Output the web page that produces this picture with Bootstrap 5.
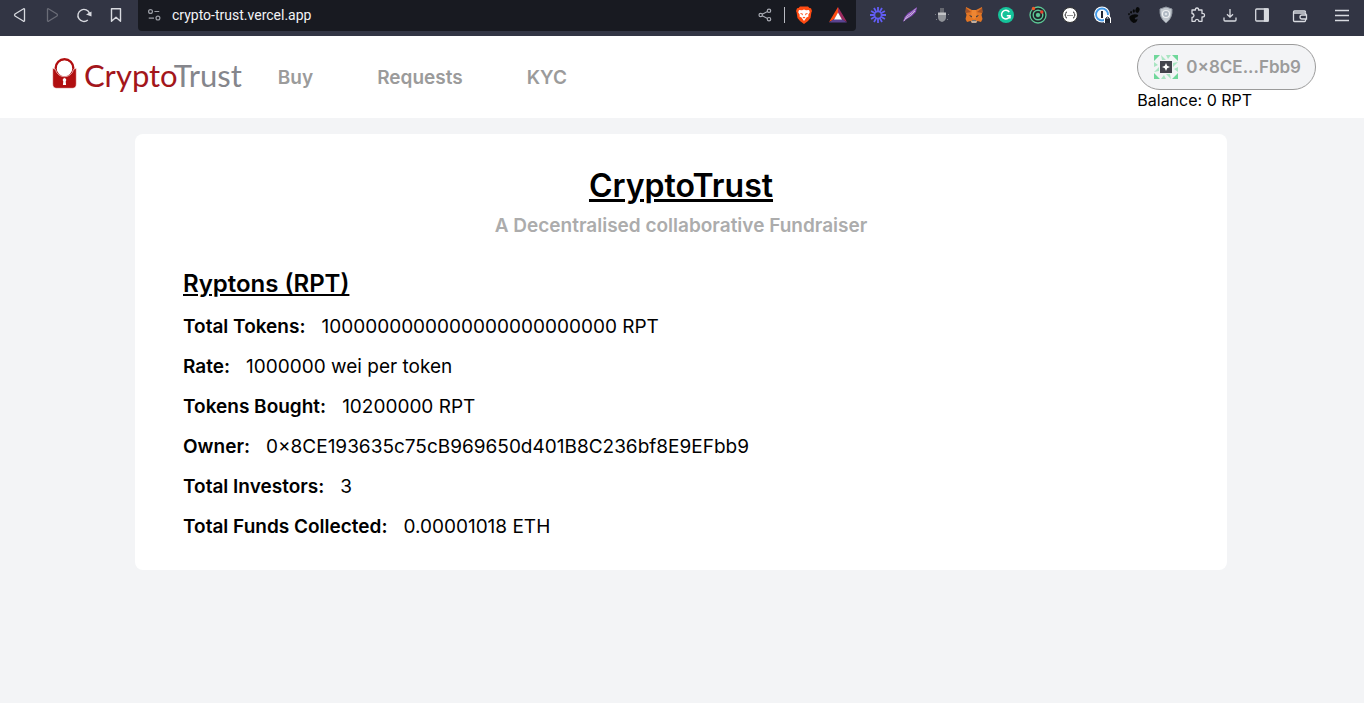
<!DOCTYPE html>
<html lang="en">
<head>
<meta charset="utf-8">
<meta name="viewport" content="width=device-width, initial-scale=1">
<title>CryptoTrust</title>
<link href="https://cdn.jsdelivr.net/npm/bootstrap@5.3.0/dist/css/bootstrap.min.css" rel="stylesheet">
<style>
body { font-family: Inter, "Liberation Sans", sans-serif; font-optical-sizing: none; background: #f3f4f6; color: #000; font-size: 16px; line-height: 20px; }
.toolbar { background: #323544; height: 36px; padding: 0 6px 0 4px; font-family: Roboto, sans-serif; }
.tool { width: 32px; height: 30px; padding: 0; border: 0; background: none; color: #d8dae0; display: flex; align-items: center; justify-content: center; flex: none; }
.tool svg { display: block; }
.tool:disabled { color: #6a6c77; }
.tool-wallet { margin: 0 10px 0 6px; }
.address { background: #181a21; padding: 0 2px 1px 0; border-radius: 0 0 4px 4px; margin: 0 6px; min-width: 0; }
.address input { background: none; border: 0; color: #f2f3f5; font-size: 14px; line-height: 20px; padding: 0 0 0 2px; outline: 0; min-width: 0; }
.address .split { width: 1px; height: 16px; background: #b9bbc2; margin: 0 3px; }
.tool-shields { margin-right: 2px; }
.site-nav { min-height: 82px; padding: 0 48px 0 52px; }
.brand-link { padding-bottom: 4px; }
.brand-text { font-family: Lato, sans-serif; font-weight: 400; font-size: 31px; line-height: 40px; color: #a3161b; }
.brand-text span { color: #85868c; }
.site-links { gap: 64px; margin-left: 36px; padding-top: 2px; }
.site-link { color: #9b9b9b; font-size: 19px; font-weight: 600; text-decoration: none; }
.wallet { height: 46px; border: 1px solid #9b9b9b; border-radius: 23px; background: #f3f4f6; color: #9b9b9b; font-size: 17px; font-weight: 600; padding: 0 14px 0 16px; gap: 8px; }
.panel { background: #fff; border-radius: 8px; margin: 16px 137px 16px 135px; padding: 32px 48px 23px; }
.title { font-size: 32px; line-height: 40px; font-weight: 600; }
.subtitle { font-size: 19px; line-height: 40px; font-weight: 600; color: #acacac; margin-bottom: 22px; }
.section-title { font-size: 24px; line-height: 32px; font-weight: 600; margin-bottom: 7px; }
.facts { font-size: 19px; line-height: 40px; }
.facts dt { font-weight: 600; }
</style>
</head>
<body>
<header class="toolbar d-flex align-items-start">
  <button class="tool" aria-label="Back"><svg width="16" height="16" viewBox="0 0 16 16" fill="none" stroke="currentColor" stroke-width="1.3" stroke-linejoin="round"><path d="M12.500 2v12q-.5.8-1.300 0L3 9q-1-1 0-2l8.200-5q.8-.6 1.300 0z"/></svg></button>
  <button class="tool" aria-label="Forward" disabled><svg width="16" height="16" viewBox="0 0 16 16" fill="none" stroke="currentColor" stroke-width="1.300" stroke-linejoin="round"><path d="M3.500 2v12q.5.8 1.300 0L13 9q1-1 0-2L4.800 2q-.8-.6-1.300 0z"/></svg></button>
  <button class="tool" aria-label="Reload"><svg width="16" height="16" viewBox="0 0 16 16" fill="none" stroke="currentColor" stroke-width="1.400"><path d="M11.800 13A6 6 0 1 1 13.600 6.500"/><path d="M15.500 4.500v5L10 7.500z" fill="currentColor" stroke="none"/></svg></button>
  <button class="tool" aria-label="Bookmark"><svg width="16" height="16" viewBox="0 0 16 16" fill="none" stroke="currentColor" stroke-width="1.400" stroke-linejoin="round"><path d="M3.500 1.700h9v12.600L8 10.300l-4.500 4z"/></svg></button>
  <div class="address d-flex align-items-center flex-grow-1">
    <button class="tool" aria-label="Site settings"><svg width="14" height="14" viewBox="0 0 16 16" fill="none" stroke="#9a9da5" stroke-width="1.400"><circle cx="4" cy="4" r="2.200"/><path d="M8.500 4H14M2 11.500h6"/><circle cx="12.500" cy="11.500" r="2.200"/></svg></button>
    <input class="flex-grow-1" type="text" aria-label="Address" value="crypto-trust.vercel.app">
    <button class="tool" aria-label="Share"><svg width="14" height="14" viewBox="0 0 14 14" fill="none" stroke="#a8abb3" stroke-width="1.200"><circle cx="2.700" cy="7" r="1.700"/><circle cx="11" cy="2.800" r="1.700"/><circle cx="11" cy="11.200" r="1.700"/><path d="M4.200 6.200l5.300-2.700M4.200 7.800l5.300 2.700"/></svg></button>
    <span class="split"></span>
    <button class="tool tool-shields" aria-label="Shields"><svg width="18" height="18" viewBox="0 0 18 18"><path fill="#ff4b12" d="M5 .5h8l1.500 1.500 1.500.3 1 2.700-.6 1.500L15.500 12l-2.500 3L9 18l-4-3-2.500-3L1.600 6.500 1 5l1-2.700L3.500 2z"/><path fill="#fff" d="M4 4l3 .3L9 3.600l2 .7L14 4l.8 2.300-1.500 2.500.2 1.700-2 1L9 15l-2.500-3.500-2-1 .2-1.700L3.200 6.300z"/><path fill="#ff4b12" d="M4.800 7l2.700.4.5 2zM13.200 7l-2.700.4-.5 2zM7.500 11.500L9 10.700l1.500.8L9 12.500z"/></svg></button>
    <button class="tool" aria-label="Rewards"><svg width="18" height="18" viewBox="0 0 18 18"><path fill="#ff4b12" d="M9 1L0 16l5-2.500L9 7z"/><path fill="#9c2a5f" d="M9 1l9 15-5-2.500L9 7z"/><path fill="#5b4391" d="M0 16.500h18l-5-3.500H5z"/><path fill="#fff" d="M9 6.500l4 7H5z"/></svg></button>
  </div>
  <button class="tool" aria-label="Loom"><svg width="18" height="18" viewBox="0 0 18 18" stroke="#625df5" stroke-width="1.800"><path d="M9 1v5M9 12v5M1 9h5M12 9h5M5 2.070l2.500 4.330M10.500 11.600l2.500 4.330M2.070 5l4.330 2.500M11.600 10.500l4.330 2.500M13 2.070l-2.500 4.330M7.500 11.600L5 15.930M15.930 5l-4.330 2.500M6.400 10.500L2.070 13"/><circle cx="9" cy="9" r="3.300" fill="#323544" stroke-width="1.200"/></svg></button>
  <button class="tool" aria-label="Feather"><svg width="16" height="18" viewBox="0 0 16 18" fill="none"><path d="M1 16l1.500-5L6 7l4-2.500L15 1l-1 5-4 4-5 3z" fill="#8348b8"/><path d="M2 15l3-5 5-3.500 4-4M4 12.500l5-3.500 4-4" stroke="#c9b5d8" stroke-width="1"/></svg></button>
  <button class="tool" aria-label="Profile"><svg width="16" height="16" viewBox="0 0 16 16"><path d="M6 1h4v5H6z" fill="#666870"/><path d="M4 6h8v4q0 4-4 5-4-1-4-5z" fill="#909399"/><path d="M4 5.500h8v2.500H4z" fill="#c3c4c7"/><path d="M1 7.500h1M14 7.500h1M2 12.500h1M13 12.500h1" stroke="#777982"/></svg></button>
  <button class="tool" aria-label="MetaMask"><svg width="18" height="18" viewBox="0 0 18 18"><path fill="#e27625" d="M1 1l6 3h4l6-3 .5 5-1 3 1 4-1.500 3-3.500-1L11 17H7l-1.500-2L2 16 .5 13l1-4-1-3z"/><path fill="#a65326" d="M1 2l5 4-5 1zM17 2l-5 4 5 1z"/><path fill="#ee8632" d="M7 4h4l1 7-3 2-3-2z"/><path fill="#233447" d="M4 9l3 1-.5 1.500zM14 9l-3 1 .5 1.500zM7 14h4v1.500H7z"/><path fill="#c0ad9e" d="M6 15.500l1-1h4l1 1-1 1.500H7z"/></svg></button>
  <button class="tool" aria-label="Grammarly"><svg width="16" height="16" viewBox="0 0 16 16"><circle cx="8" cy="8" r="8" fill="#15c39a"/><path d="M11.300 5A4.300 4.300 0 1 0 12 8.800H8.800M12 8.500v3" fill="none" stroke="#fff" stroke-width="1.500"/></svg></button>
  <button class="tool" aria-label="Orbit"><svg width="18" height="18" viewBox="0 0 18 18" fill="none" stroke="#5cc796"><circle cx="9" cy="9" r="8" fill="#20242a" stroke-width="1.300"/><circle cx="9" cy="9" r="4.800" stroke-width="1.400"/><circle cx="9" cy="9" r="1.800" fill="#5cc796"/><circle cx="4.500" cy="2.500" r="1.700" fill="#f05a28" stroke="none"/><circle cx="12.800" cy="6" r="1.700" fill="#e8432e" stroke="none"/></svg></button>
  <button class="tool" aria-label="JSON"><svg width="16" height="16" viewBox="0 0 16 16" fill="none" stroke="#333"><circle cx="8" cy="8" r="7.500" fill="#fff"/><path d="M5 5q-1.500 0-1.300 1.500 0 1.500-1 1.500 1 0 1 1.500Q3.500 11 5 11M11 5q1.500 0 1.300 1.500 0 1.500 1 1.500-1 0-1 1.500.2 1.500-1.300 1.500"/><path d="M5.500 8.500h1M7.500 8.500h1M9.500 8.500h1"/></svg></button>
  <button class="tool" aria-label="Password manager"><svg width="18" height="18" viewBox="0 0 18 18"><circle cx="9" cy="8.500" r="8" fill="#fff"/><circle cx="9" cy="8.500" r="6" fill="#f7f9fb" stroke="#4299e8" stroke-width="1.800"/><path d="M8 5h2v7H8z" fill="#202735"/><path d="M11 9h5l2 3v5h-7z" fill="#fff"/><path d="M12 12.500h5V17h-5z" fill="#202735"/><path d="M13 13v-1q1.500-2 3 0v1" fill="none" stroke="#202735"/></svg></button>
  <button class="tool" aria-label="GNOME"><svg width="16" height="16" viewBox="0 0 16 16" fill="#080909"><path d="M4 9q3-2.500 7-1.500 2.500 1 0 2.500-3 1-2 2t2 0 0 2q-1 2-3.500 2-3-1-4-4.500Q3 9.500 4 9z"/><ellipse cx="11.500" cy="3" rx="2" ry="2.900" transform="rotate(15 11.500 3)"/><ellipse cx="7.800" cy="4" rx="1.100" ry="1.800"/><ellipse cx="5.100" cy="5.300" rx=".9" ry="1.400"/><ellipse cx="3" cy="7.200" rx=".8" ry="1.100"/></svg></button>
  <button class="tool" aria-label="Privacy shield"><svg width="16" height="18" viewBox="0 0 16 18"><path fill="#c1c7ce" stroke="#8d949e" d="M8 1l6 2q.8 9-6 14Q1.200 12 2 3z"/><circle cx="8" cy="8" r="3.500" fill="#aeb7c2" stroke="#eef0f2" stroke-width="1.200"/><circle cx="8" cy="8" r="1.300" fill="#dfe3e8"/></svg></button>
  <button class="tool" aria-label="Extensions"><svg width="16" height="16" viewBox="0 0 16 16" fill="none" stroke="currentColor" stroke-width="1.300" stroke-linejoin="round"><path d="M2 3h3.500q-.3-2 1.500-2t1.500 2H12v3.500q2.500-.3 2.500 1.700T12 10v4.300H9q-.3-2-2-2t-2 2H2V10.500q2-.3 2-2t-2-2z"/></svg></button>
  <button class="tool" aria-label="Downloads"><svg width="16" height="16" viewBox="0 0 16 16" fill="none" stroke="currentColor" stroke-width="1.300"><path d="M8 2v8M5 7.200l3 3 3-3M2 10.500V13q0 1 1 1h10q1 0 1-1v-2.500"/></svg></button>
  <button class="tool" aria-label="Side panel"><svg width="16" height="16" viewBox="0 0 16 16" fill="none" stroke="currentColor" stroke-width="1.300"><rect x="1.700" y="2" width="12.600" height="12" rx="1"/><path d="M10.500 2H14v12h-3.500z" fill="currentColor"/></svg></button>
  <button class="tool tool-wallet" aria-label="Wallet"><svg width="16" height="16" viewBox="0 0 16 16" fill="none" stroke="currentColor" stroke-width="1.300"><path d="M13.500 5.500V5q0-1-1-1h-10Q1.500 4 1.500 5v8.500q0 1 1 1h10q1 0 1-1v-1.500M1.500 6h11q1.500 0 1.500 2M14.500 8H10a2 2 0 0 0 0 4h4.500z"/></svg></button>
  <button class="tool" aria-label="Menu"><svg width="16" height="16" viewBox="0 0 16 16" stroke="currentColor" stroke-width="1.300"><path d="M1 3.500h14M1 8.500h14M1 13.500h14"/></svg></button>
</header>

<nav class="site-nav bg-white d-flex align-items-center" aria-label="Main">
  <a class="brand-link d-flex align-items-center text-decoration-none" href="#">
    <svg width="32" height="36" viewBox="0 0 32 36" aria-hidden="true"><circle cx="12.500" cy="11" r="8.800" fill="none" stroke="#b10f10" stroke-width="2.400"/><path fill="#b10f10" stroke="#fff" stroke-width=".6" d="M.7 11l2.800 1.500a9.200 9.200 0 0 0 18 0l2.800-1.500v16q0 4.300-4 4.300H4.700q-4 0-4-4.300z"/><circle cx="12.500" cy="11.500" r="7.700" fill="#fff"/><path fill="#fff" d="M12.500 21a2 2 0 0 1 1.200 3.400l.4 3.600h-3.200l.4-3.600a2 2 0 0 1 1.200-3.400z"/></svg>
    <span class="brand-text">Crypto<span>Trust</span></span>
  </a>
  <div class="site-links d-flex">
    <a class="site-link" href="#">Buy</a>
    <a class="site-link" href="#">Requests</a>
    <a class="site-link" href="#">KYC</a>
  </div>
  <div class="ms-auto">
    <button class="wallet d-flex align-items-center">
      <svg width="24" height="24" viewBox="0 0 24 24" aria-hidden="true"><path fill="#6fd79a" d="M0 0h6L0 6zM18 0h6v6zM0 18v6h6zM24 18v6h-6z"/><path fill="#a9e5c2" d="M7 0l5 5H8zM12 0h5l-3 4zM24 7l-5 5V8zM24 12v5l-4-3zM17 24l-5-5h4zM12 24H7l3-4zM0 17l5-5v4zM0 12V7l4 3z"/><path fill="#43444d" d="M6 6h12v12H6z"/><path fill="#fff" d="M12 8l1.200 2.800L16 12l-2.800 1.200L12 16l-1.200-2.800L8 12l2.800-1.200z"/></svg>
      <span>0×8CE...Fbb9</span>
    </button>
    <div>Balance: 0 RPT</div>
  </div>
</nav>

<main class="panel">
  <h1 class="title text-center text-decoration-underline mb-0">CryptoTrust</h1>
  <p class="subtitle text-center">A Decentralised collaborative Fundraiser</p>
  <h2 class="section-title text-decoration-underline">Ryptons (RPT)</h2>
  <dl class="facts mb-0">
    <div class="d-flex gap-3"><dt>Total Tokens:</dt><dd class="mb-0">1000000000000000000000000 RPT</dd></div>
    <div class="d-flex gap-3"><dt>Rate:</dt><dd class="mb-0">1000000 wei per token</dd></div>
    <div class="d-flex gap-3"><dt>Tokens Bought:</dt><dd class="mb-0">10200000 RPT</dd></div>
    <div class="d-flex gap-3"><dt>Owner:</dt><dd class="mb-0">0×8CE193635c75cB969650d401B8C236bf8E9EFbb9</dd></div>
    <div class="d-flex gap-3"><dt>Total Investors:</dt><dd class="mb-0">3</dd></div>
    <div class="d-flex gap-3"><dt>Total Funds Collected:</dt><dd class="mb-0">0.00001018 ETH</dd></div>
  </dl>
</main>
<script src="https://cdn.jsdelivr.net/npm/bootstrap@5.3.0/dist/js/bootstrap.bundle.min.js"></script>
</body>
</html>
